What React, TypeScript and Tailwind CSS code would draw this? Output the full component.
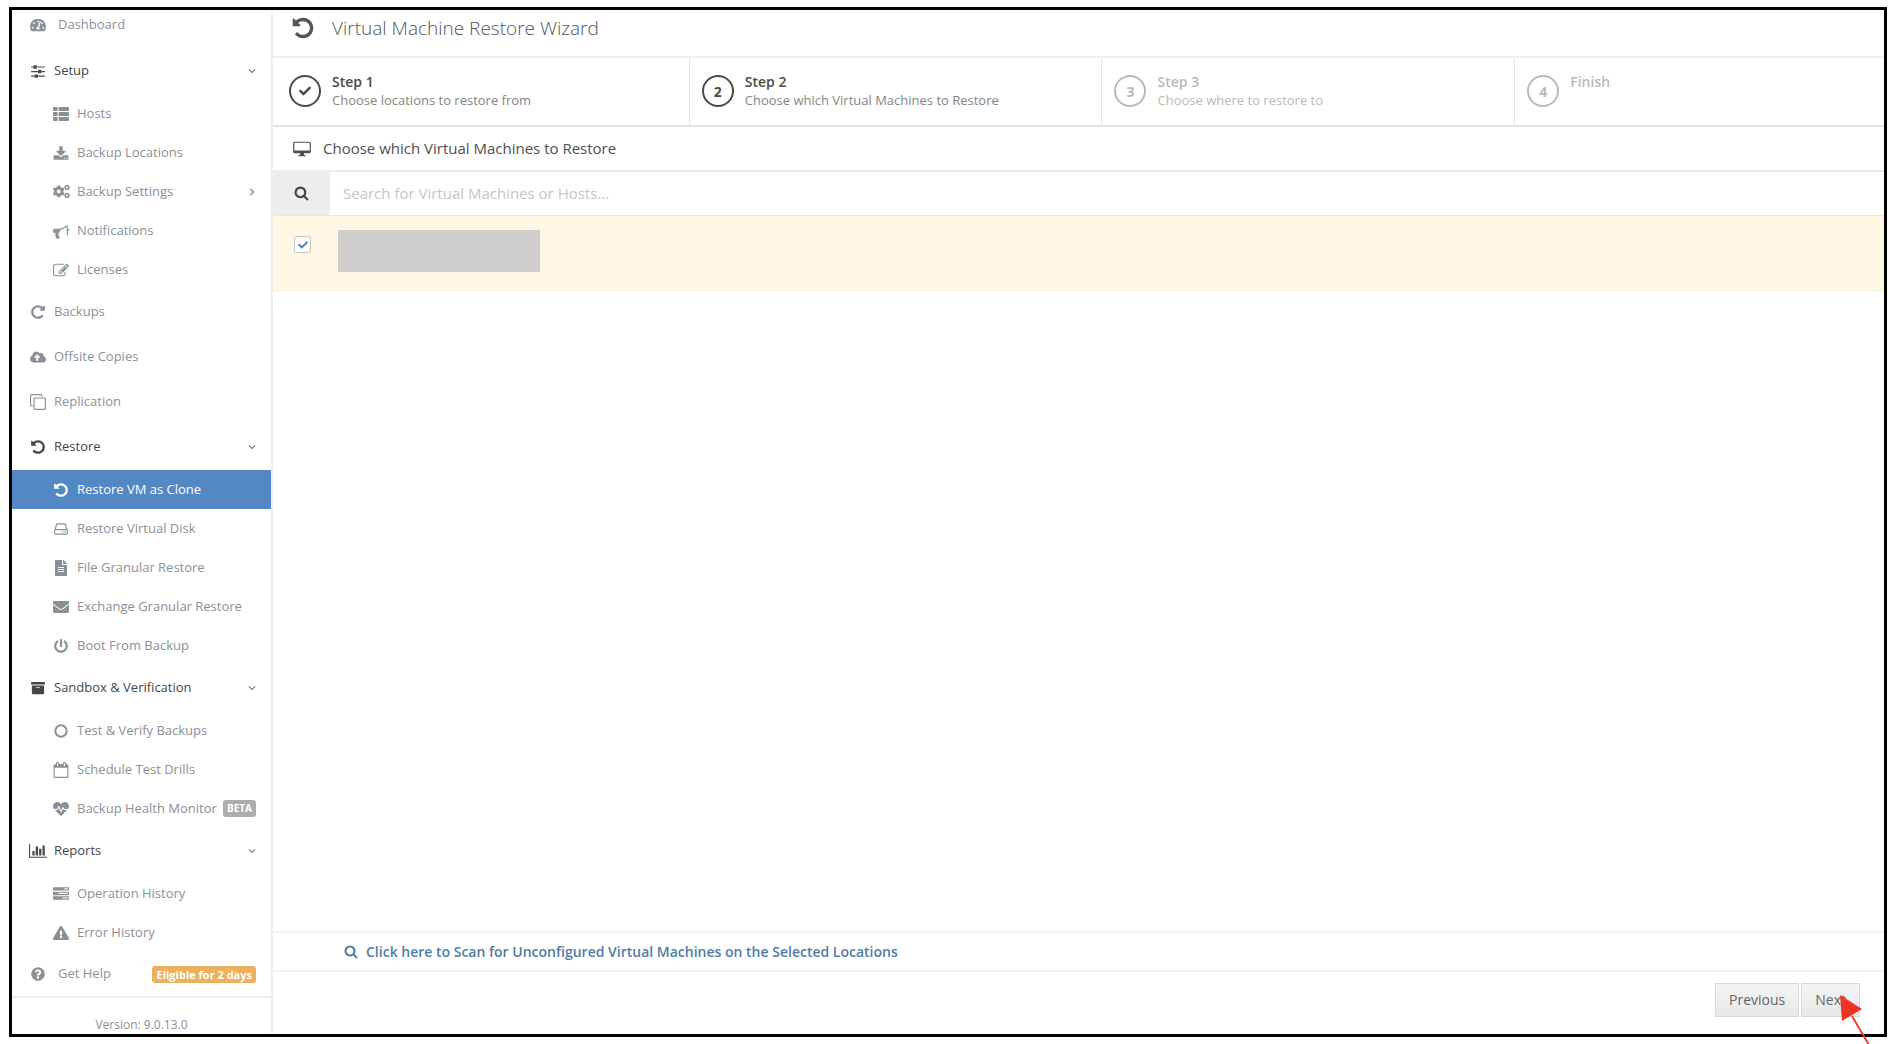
import classNames from "clsx";
import { FC, ReactNode, useState } from "react";
import {
  FaArchive,
  FaCheck,
  FaCloudUploadAlt,
  FaCogs,
  FaEnvelope,
  FaExclamationTriangle,
  FaFileAlt,
  FaHeartbeat,
  FaPowerOff,
  FaQuestionCircle,
  FaTachometerAlt,
  FaThList,
} from "react-icons/fa";

interface GlyphProps {
  d: string;
  viewBox?: string;
  className?: string;
}
const Glyph: FC<GlyphProps> = ({ d, viewBox = "0 0 1792 1792", className }) => (
  <svg viewBox={viewBox} fill="currentColor" className={className} aria-hidden="true">
    <path d={d} />
  </svg>
);

const UNDO =
  "M1664 896q0 156-61 298t-164 245-245 164-298 61q-172 0-327-72.500T305 1387q-7-10-6.500-22.500t8.500-20.500l137-138q10-9 25-9 16 2 23 12 73 95 179 147t225 52q104 0 198.500-40.500T1258 1259t109.500-163.500T1408 896t-40.500-198.500T1258 533t-163.500-109.500T896 383q-98 0-188 35.500T548 520l137 138q31 30 14 69-17 40-59 40H192q-26 0-45-19t-19-45V256q0-42 40-59 39-17 69 14l130 129q107-101 244.500-156.500T896 128q156 0 298 61t245 164 164 245 61 298z";
const REPEAT =
  "M1664 256v448q0 26-19 45t-45 19h-448q-42 0-59-40-17-39 14-69l138-138Q1097 384 896 384q-104 0-198.500 40.500T534 534 424.500 697.500 384 896t40.500 198.500T534 1258t163.500 109.500T896 1408q119 0 225-52t179-147q7-10 23-12 15 0 25 9l137 138q9 8 9.500 20.500t-7.500 22.500q-109 132-264 204.500T896 1664q-156 0-298-61t-245-164-164-245-61-298 61-298 164-245 245-164 298-61q147 0 284.500 55.500T1425 340l130-129q29-31 70-14 39 17 39 59z";
const SEARCH =
  "M1216 832q0-185-131.500-316.500T768 384 451.500 515.500 320 832t131.500 316.500T768 1280t316.500-131.500T1216 832zm512 832q0 52-38 90t-90 38q-54 0-90-38l-343-342q-179 124-399 124-143 0-273.500-55.500t-225-150-150-225T64 832t55.500-273.500 150-225 225-150T768 128t273.500 55.500 225 150 150 225T1472 832q0 220-124 399l343 343q37 37 37 90z";
const SLIDERS =
  "M480 1408v128H128v-128h352zm352-128q26 0 45 19t19 45v256q0 26-19 45t-45 19H576q-26 0-45-19t-19-45v-256q0-26 19-45t45-19h256zm160-384v128H128V896h864zM352 384v128H128V384h224zm1312 1024v128H928v-128h736zM704 256q26 0 45 19t19 45v256q0 26-19 45t-45 19H448q-26 0-45-19t-19-45V320q0-26 19-45t45-19h256zm512 512q26 0 45 19t19 45v256q0 26-19 45t-45 19H960q-26 0-45-19t-19-45V832q0-26 19-45t45-19h256zm448 128v128h-352V896h352zm0-512v128H832V384h832z";
const BARS =
  "M640 896v512H384V896h256zm384-512v1024H768V384h256zm1024 1152v128H0V128h128v1408h1920zm-640-896v768h-256V640h256zm384-384v1152h-256V256h256z";
const DISK =
  "M1040 1216q0 33-23.500 56.500T960 1296t-56.500-23.500T880 1216t23.500-56.500T960 1136t56.500 23.500 23.500 56.500zm256 0q0 33-23.500 56.500T1216 1296t-56.500-23.500-23.500-56.500 23.500-56.500 56.500-23.500 56.500 23.500 23.500 56.500zm112 160v-320q0-13-9.500-22.500T1376 1024H160q-13 0-22.500 9.500T128 1056v320q0 13 9.500 22.500t22.500 9.500h1216q13 0 22.500-9.500t9.500-22.500zM178 896h1180l-157-482q-4-13-16-21.500t-26-8.500H377q-14 0-26 8.500T335 414zm1358 160v320q0 66-47 113t-113 47H160q-66 0-113-47T0 1376v-320q0-25 16-75l197-606q17-53 63-86t101-33h782q55 0 101 33t63 86l197 606q16 50 16 75z";
const CLONE =
  "M1664 1632V544q0-13-9.500-22.500T1632 512H544q-13 0-22.500 9.500T512 544v1088q0 13 9.500 22.500t22.500 9.500h1088q13 0 22.500-9.500t9.500-22.500zm128-1088v1088q0 66-47 113t-113 47H544q-66 0-113-47t-47-113V544q0-66 47-113t113-47h1088q66 0 113 47t47 113zm-384-384v160h-128V160q0-13-9.500-22.500T1248 128H160q-13 0-22.500 9.500T128 160v1088q0 13 9.500 22.500t22.500 9.500h160v128H160q-66 0-113-47T0 1248V160Q0 94 47 47T160 0h1088q66 0 113 47t47 113z";
const CALENDAR =
  "M256 1664h1408V640H256v1024zM640 448V160q0-14-9-23t-23-9h-64q-14 0-23 9t-9 23v288q0 14 9 23t23 9h64q14 0 23-9t9-23zm768 0V160q0-14-9-23t-23-9h-64q-14 0-23 9t-9 23v288q0 14 9 23t23 9h64q14 0 23-9t9-23zm384-64v1280q0 52-38 90t-90 38H256q-52 0-90-38t-38-90V384q0-52 38-90t90-38h128v-96q0-66 47-113T544 0h64q66 0 113 47t47 113v96h384v-96q0-66 47-113t113-47h64q66 0 113 47t47 113v96h128q52 0 90 38t38 90z";
const BULLHORN =
  "M1664 640q53 0 90.500 37.500t37.500 90.500-37.500 90.500-90.500 37.500v384q0 52-38 90t-90 38q-417-347-812-380-58 19-91 66t-31 100.500 40 92.500q-20 33-23 65.500t6 58 33.500 55 48 50T768 1664q-29 58-111.500 83t-168.500 11.500-132-55.500q-7-23-29.500-87.500t-32-94.500-23-89-15-101 3.500-98.500 22-110.500H160q-66 0-113-47T0 992V800q0-66 47-113t113-47h480q435 0 896-384 52 0 90 38t38 90v256zm-128 604V430q-394 302-768 343v270q377 42 768 343z";
const EDIT =
  "M888 1184l116-116-152-152-116 116v56h96v96h56zm440-720q-16-16-33 1L945 815q-17 17-1 33t33-1l350-350q17-17 1-33zm80 594v190q0 119-84.500 203.500T1120 1536H288q-119 0-203.500-84.500T0 1248V416q0-119 84.500-203.500T288 128h832q63 0 117 25 15 7 18 23 3 17-9 29l-49 49q-14 14-32 8-23-6-45-6H288q-66 0-113 47t-47 113v832q0 66 47 113t113 47h832q66 0 113-47t47-113v-126q0-13 9-22l64-64q15-15 35-7t20 29zm-96-738l288 288-672 672H640V992zm444 132l-92 92-288-288 92-92q28-28 68-28t68 28l152 152q28 28 28 68t-28 68z";
const DOWNLOAD =
  "M1344 1344q0-26-19-45t-45-19-45 19-19 45 19 45 45 19 45-19 19-45zm256 0q0-26-19-45t-45-19-45 19-19 45 19 45 45 19 45-19 19-45zm128-224v320q0 40-28 68t-68 28H160q-40 0-68-28t-28-68v-320q0-40 28-68t68-28h465l135 136q58 56 136 56t136-56l136-136h464q40 0 68 28t28 68zm-325-569q17 41-14 70l-448 448q-18 19-45 19t-45-19L403 621q-31-29-14-70 17-39 59-39h256V64q0-26 19-45t45-19h256q26 0 45 19t19 45v448h256q42 0 59 39z";
const TASKS =
  "M1024 1408h640v-128h-640v128zM640 896h1024V768H640v128zm640-512h384V256h-384v128zm512 832v256q0 26-19 45t-45 19H64q-26 0-45-19t-19-45v-256q0-26 19-45t45-19h1664q26 0 45 19t19 45zm0-512v256q0 26-19 45t-45 19H64q-26 0-45-19t-19-45V704q0-26 19-45t45-19h1664q26 0 45 19t19 45zm0-512v256q0 26-19 45t-45 19H64q-26 0-45-19t-19-45V192q0-26 19-45t45-19h1664q26 0 45 19t19 45z";

interface MenuItem {
  title: string;
  icon: ReactNode;
  active?: boolean;
  arrow?: boolean;
  badge?: string;
}
interface MenuSection {
  title: string;
  icon: ReactNode;
  items?: MenuItem[];
}

const MENU: MenuSection[] = [
  {
    title: "Setup",
    icon: <Glyph d={SLIDERS} className="size-4" />,
    items: [
      { title: "Hosts", icon: <FaThList className="size-4" /> },
      { title: "Backup Locations", icon: <Glyph d={DOWNLOAD} viewBox="0 -128 1792 1792" className="size-4" /> },
      { title: "Backup Settings", icon: <FaCogs className="size-[17px]" />, arrow: true },
      { title: "Notifications", icon: <Glyph d={BULLHORN} className="size-4" /> },
      { title: "Licenses", icon: <Glyph d={EDIT} viewBox="0 0 1792 1664" className="size-4" /> },
    ],
  },
  { title: "Backups", icon: <Glyph d={REPEAT} className="size-4" /> },
  { title: "Offsite Copies", icon: <FaCloudUploadAlt className="size-4" /> },
  { title: "Replication", icon: <Glyph d={CLONE} className="size-4" /> },
  {
    title: "Restore",
    icon: <Glyph d={UNDO} className="size-4" />,
    items: [
      { title: "Restore VM as Clone", icon: <Glyph d={UNDO} className="size-4" />, active: true },
      { title: "Restore Virtual Disk", icon: <Glyph d={DISK} viewBox="0 0 1536 1792" className="size-4" /> },
      { title: "File Granular Restore", icon: <FaFileAlt className="h-4 w-[14px]" /> },
      { title: "Exchange Granular Restore", icon: <FaEnvelope className="size-4" /> },
      { title: "Boot From Backup", icon: <FaPowerOff className="size-[14px]" /> },
    ],
  },
  {
    title: "Sandbox & Verification",
    icon: <FaArchive className="size-[14px]" />,
    items: [
      {
        title: "Test & Verify Backups",
        icon: (
          <svg viewBox="0 0 14 14" fill="none" stroke="currentColor" strokeWidth="2" className="size-[14px]">
            <circle cx="7" cy="7" r="5.700" />
          </svg>
        ),
      },
      { title: "Schedule Test Drills", icon: <Glyph d={CALENDAR} viewBox="64 0 1792 1792" className="size-4" /> },
      { title: "Backup Health Monitor", icon: <FaHeartbeat className="size-4" />, badge: "BETA" },
    ],
  },
  {
    title: "Reports",
    icon: <Glyph d={BARS} viewBox="0 0 2048 1792" className="h-4 w-[18px]" />,
    items: [
      { title: "Operation History", icon: <Glyph d={TASKS} className="size-4" /> },
      { title: "Error History", icon: <FaExclamationTriangle className="size-4" /> },
    ],
  },
];

const STEPS = [
  { title: "Step 1", text: "Choose locations to restore from", state: "done" },
  { title: "Step 2", text: "Choose which Virtual Machines to Restore", state: "current" },
  { title: "Step 3", text: "Choose where to restore to", state: "next" },
  { title: "Finish", text: "", state: "next" },
];

const Chevron: FC<{ className?: string }> = ({ className }) => (
  <svg
    viewBox="0 0 8 8"
    fill="none"
    stroke="currentColor"
    strokeWidth="1.100"
    className={classNames("ml-auto size-2 shrink-0 text-[#74777c]", className)}
    aria-hidden="true"
  >
    <path d="M0.800 2.300 4 5.500 7.200 2.300" />
  </svg>
);

const IconSlot: FC<{ children: ReactNode }> = ({ children }) => (
  <span className="flex w-5 shrink-0 items-center justify-center">{children}</span>
);

const Sidebar: FC = () => (
  <aside className="flex w-[261px] shrink-0 flex-col border-r-2 border-[#efefef] text-[13px] text-[#8b9097]">
    <nav>
      <a href="#dashboard" className="flex h-[38px] items-center gap-[10px] pb-2 pl-4">
        <IconSlot>
          <FaTachometerAlt className="size-4" />
        </IconSlot>
        Dashboard
      </a>
      {MENU.map((section) => (
        <div key={section.title}>
          <a
            href="#section"
            className={classNames("flex h-[45px] items-center gap-[6px] pr-[15px] pl-4", {
              "text-[#43464b]": section.items,
            })}
          >
            <IconSlot>{section.icon}</IconSlot>
            {section.title}
            {section.items && <Chevron />}
          </a>
          {section.items && (
            <ul className="pt-px">
              {section.items.map((item) => (
                <li key={item.title}>
                  <a
                    href="#item"
                    className={classNames(
                      "flex h-[39px] items-center gap-[6px] pr-[15px] pl-[39px] whitespace-nowrap",
                      { "bg-[#5488c4] text-white": item.active }
                    )}
                  >
                    <IconSlot>{item.icon}</IconSlot>
                    {item.title}
                    {item.badge && (
                      <span className="ml-auto rounded-[3px] bg-[#adadad] px-1 text-[10px] leading-[17px] font-bold text-white">
                        {item.badge}
                      </span>
                    )}
                    {item.arrow && <Chevron className="-rotate-90" />}
                  </a>
                </li>
              ))}
            </ul>
          )}
        </div>
      ))}
      <a href="#help" className="flex h-11 items-center gap-[10px] pr-[15px] pl-4">
        <IconSlot>
          <FaQuestionCircle className="size-[14px]" />
        </IconSlot>
        Get Help
        <span className="ml-auto rounded-[3px] bg-[#ebb160] px-1 text-[11px] leading-[17px] font-bold text-white">
          Eligible for 2 days
        </span>
      </a>
    </nav>
    <p className="flex-1 border-t-2 border-[#efefef] pt-[18px] text-center text-[12px] leading-[18px]">
      Version: 9.0.13.0
    </p>
  </aside>
);

const Steps: FC = () => (
  <ol className="grid h-[69px] grid-cols-[413fr_413fr_413fr_369fr] border-b-2 border-[#e2e2e2] pl-1">
    {STEPS.map((step, index) => (
      <li
        key={step.title}
        className={classNames("flex gap-[11px] border-[#e4e4e4] pl-3", {
          "border-r": index < STEPS.length - 1,
          "text-[#4a4a4a]": step.state !== "next",
          "text-[#b9b9b9]": step.state === "next",
        })}
      >
        <span className="mt-[17px] flex size-8 shrink-0 items-center justify-center rounded-full border-2 border-current text-[14px] font-bold">
          {step.state === "done" ? <FaCheck className="size-3" /> : index + 1}
        </span>
        <div className="pt-[14px]">
          <div className="text-[14px] leading-[19px] font-semibold">{step.title}</div>
          <div
            className={classNames("text-[13px] leading-[19px]", {
              "text-[#858585]": step.state !== "next",
            })}
          >
            {step.text}
          </div>
        </div>
      </li>
    ))}
  </ol>
);

const Wizard: FC = () => {
  const [search, setSearch] = useState<string>("");
  const [checked, setChecked] = useState<boolean>(true);

  return (
    <main className="flex min-w-0 flex-1 flex-col">
      <header className="flex h-12 items-center border-b-2 border-[#efefef] pb-[10px] pl-[18px] text-[#555]">
        <Glyph d={UNDO} className="size-6" />
        <h1 className="pl-[17px] text-[19px] font-light">Virtual Machine Restore Wizard</h1>
      </header>
      <Steps />
      <h2 className="flex h-[45px] items-center gap-3 border-b-2 border-[#ebebeb] pl-5 text-[15px] text-[#4f4f4f]">
        <svg viewBox="0 0 18 16" className="h-4 w-[18px]" fill="none" aria-hidden="true">
          <rect x="0.750" y="1.250" width="16.500" height="10.500" rx="1" stroke="currentColor" strokeWidth="1.200" />
          <path d="M1 9.500h16V12H1zM7 12h4v2h1.500v1.200h-7V14H7z" fill="currentColor" />
        </svg>
        Choose which Virtual Machines to Restore
      </h2>
      <div className="flex h-11 border-b border-[#e6e6e6]">
        <label htmlFor="search" className="flex w-[57px] items-center justify-center bg-[#ededed] text-[#444]">
          <Glyph d={SEARCH} viewBox="0 64 1792 1792" className="size-[15px]" />
        </label>
        <input
          id="search"
          type="text"
          value={search}
          onChange={(e) => setSearch(e.target.value)}
          placeholder="Search for Virtual Machines or Hosts..."
          className="flex-1 px-[13px] text-[15px] outline-none placeholder:text-[#c6c6c6]"
        />
      </div>
      <div className="flex h-[76px] gap-[27px] bg-[#fdf7e3] pt-[14px] pl-[21px]">
        <label className="relative mt-[6px] size-[17px]">
          <input
            type="checkbox"
            aria-label="Select virtual machine"
            checked={checked}
            onChange={(e) => setChecked(e.target.checked)}
            className="block size-[17px] appearance-none rounded-[3px] border border-[#c4c4c4] bg-white"
          />
          {checked && <FaCheck className="pointer-events-none absolute top-1 left-1 size-[10px] text-[#4382c8]" />}
        </label>
        <div className="h-[42px] w-[202px] bg-[#d0cdce]" />
      </div>
      <div className="flex-1" />
      <div className="flex h-[41px] items-center border-y-2 border-[#f3f3f3] pl-[71px] text-[14px] font-semibold text-[#4f7ca6]">
        <a href="#scan" className="flex items-center gap-2">
          <Glyph d={SEARCH} viewBox="0 64 1792 1792" className="size-[14px]" />
          Click here to Scan for Unconfigured Virtual Machines on the Selected Locations
        </a>
      </div>
      <div className="flex h-[62px] justify-end gap-[2px] pt-[11px] pr-6 text-[14px] text-[#666]">
        {["Previous", "Next"].map((label) => (
          <button
            key={label}
            type="button"
            className="h-[34px] border border-[#d9d9d9] bg-linear-to-b from-[#f4f4f4] to-[#e8e8e8] px-[13px] pb-px"
          >
            {label}
          </button>
        ))}
      </div>
    </main>
  );
};

const App: FC = () => (
  <div className="relative flex min-h-screen bg-white pt-[7px] pr-[11px] pb-2 pl-[9px] font-['Open_Sans',sans-serif]">
    <div className="flex flex-1 border-3 border-black">
      <Sidebar />
      <Wizard />
    </div>
    <svg
      viewBox="0 0 60 52"
      className="pointer-events-none absolute right-0 bottom-0 h-[52px] w-[60px]"
      aria-hidden="true"
    >
      <path d="M14 23 31 52" stroke="#ee3424" strokeWidth="1.800" />
      <path d="M2 2 24 16 4 28z" fill="#ee3424" />
    </svg>
  </div>
);
export default App;
